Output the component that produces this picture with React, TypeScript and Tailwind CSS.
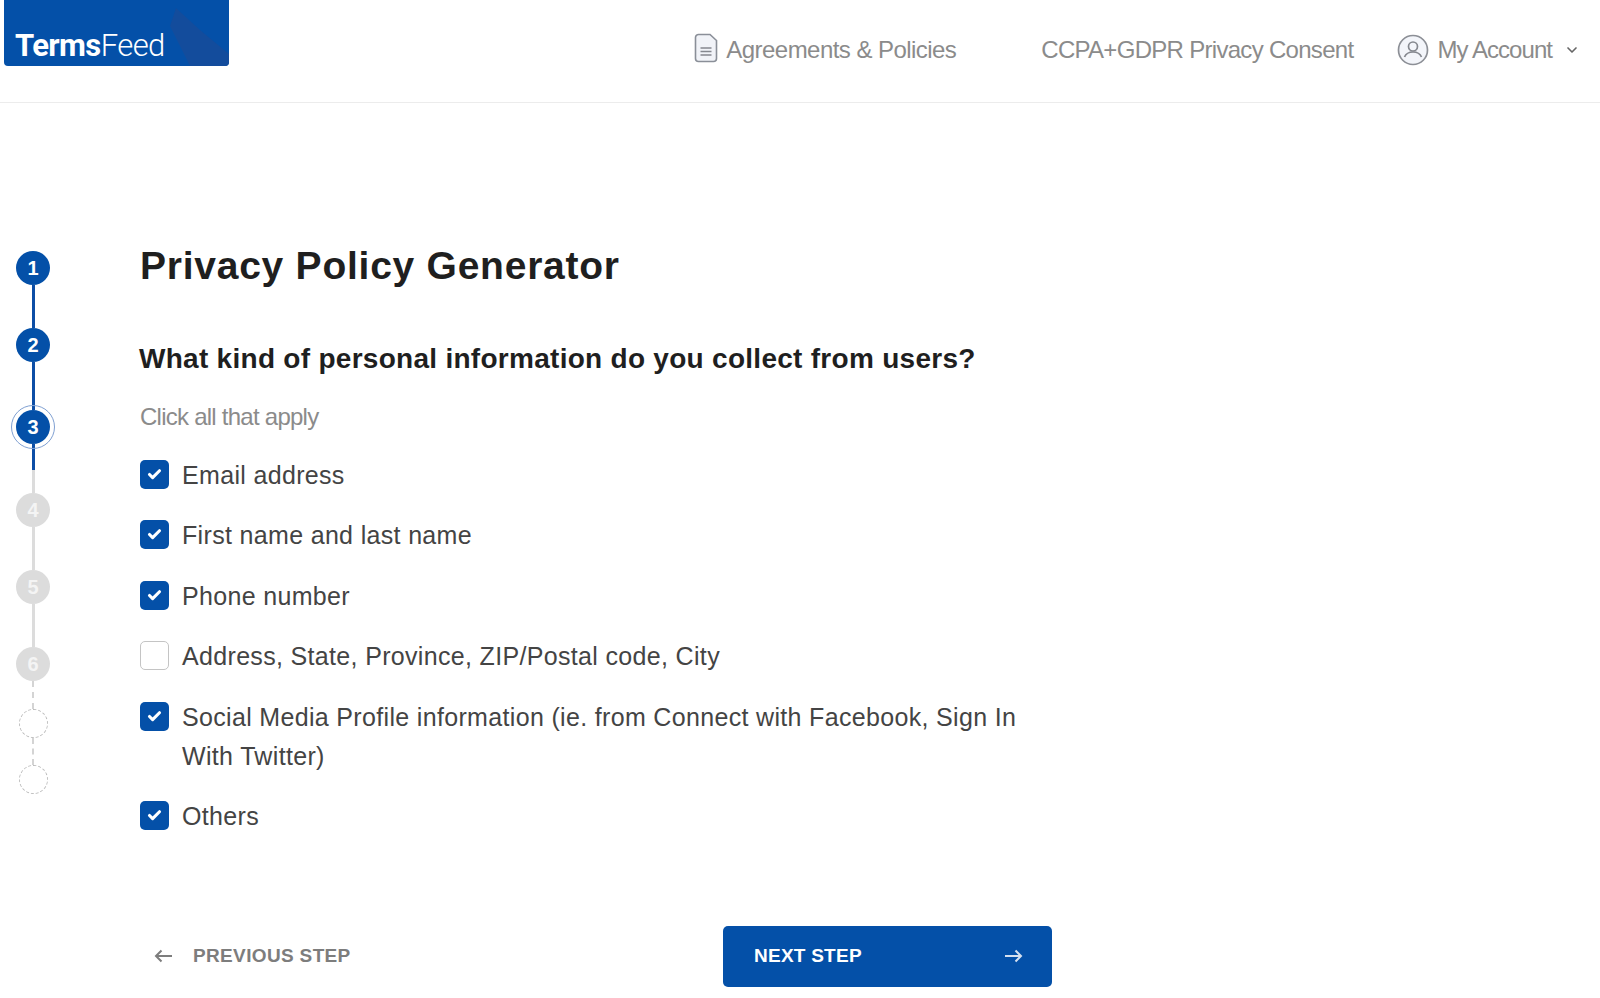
import React from "react";
import { Check, ChevronDown } from "lucide-react";

const items = [
  { label: "Email address", checked: true },
  { label: "First name and last name", checked: true },
  { label: "Phone number", checked: true },
  { label: "Address, State, Province, ZIP/Postal code, City", checked: false },
  { label: "Social Media Profile information (ie. from Connect with Facebook, Sign In With Twitter)", checked: true },
  { label: "Others", checked: true },
];

const Logo = () => (
  <div className="relative ml-1 flex h-[66px] w-[225px] items-end overflow-hidden rounded-b-[4px] bg-[#0450a8] pb-[2px] pl-[11px]">
    <svg className="absolute left-[160px] top-[4px]" width="65" height="62" viewBox="0 0 65 62">
      <path d="M12 4 L36 26 L65 50 L65 62 L26 62 L6 22 Z" fill="#134c9c" />
    </svg>
    <span className="relative font-['Roboto',sans-serif] text-[31px] leading-[36px] tracking-[-0.6px] text-white">
      <span className="font-bold">Terms</span>
      <span className="font-light">Feed</span>
    </span>
  </div>
);

const DocIcon = () => (
  <svg width="24" height="30" viewBox="0 0 24 30" fill="none" className="-mt-[4px]">
    <path d="M6 1.5h10l6.500 6v18a3 3 0 0 1-3 3H4.500a3 3 0 0 1-3-3v-21a3 3 0 0 1 3-3z" fill="#f1f3f8" stroke="#8a8f98" strokeWidth="1.600" />
    <path d="M6.500 15h11M6.500 18.500h11M6.500 22h11" stroke="#85888f" strokeWidth="1.500" />
  </svg>
);

const UserIcon = () => (
  <svg width="32" height="32" viewBox="0 0 32 32" fill="none">
    <circle cx="16" cy="16" r="14.500" fill="#f3f5fa" stroke="#8c8f96" strokeWidth="1.700" />
    <circle cx="16" cy="12.500" r="4.500" stroke="#85888f" strokeWidth="1.700" />
    <path d="M7.500 23c1.500-3.500 4.500-5 8.500-5s7 1.500 8.500 5" stroke="#85888f" strokeWidth="1.700" />
  </svg>
);

const Header = () => (
  <header className="flex h-[103px] border-b border-[#ececec] bg-white font-['Liberation_Sans',sans-serif] text-[24px] text-[#8b8b8b]">
    <Logo />
    <nav className="ml-auto flex h-[100px] items-center pr-[20px]">
      <span className="flex items-center gap-[8px] tracking-[-0.55px]">
        <DocIcon />
        Agreements &amp; Policies
      </span>
      <span className="ml-[85px] tracking-[-0.7px]">CCPA+GDPR Privacy Consent</span>
      <span className="ml-[44px] flex items-center gap-[8px] tracking-[-0.95px]">
        <UserIcon />
        My Account
        <ChevronDown size={16} strokeWidth={2.500} className="ml-[4px] text-[#666]" />
      </span>
    </nav>
  </header>
);

const Step = ({ n, done }: { n: number; done: boolean }) => (
  <div
    className={`flex h-[34px] w-[34px] shrink-0 items-center justify-center rounded-full text-[20px] font-bold ${
      done ? "bg-[#0450a8] text-white" : "bg-[#dcdcdc] text-[#f4f4f4]"
    }`}
  >
    {n}
  </div>
);

const Line = ({ h, done }: { h: string; done?: boolean }) => (
  <div className={`w-[3px] ${h} ${done ? "bg-[#0d4ea6]" : "bg-[#dcdcdc]"}`} />
);

const Stepper = () => (
  <aside className="flex w-[66px] shrink-0 flex-col items-center pt-[148px] font-['Liberation_Sans',sans-serif]">
    <Step n={1} done />
    <Line h="h-[43px]" done />
    <Step n={2} done />
    <Line h="h-[48px]" done />
    <div className="relative">
      <Step n={3} done />
      <div className="absolute -left-[5px] -top-[5px] h-[44px] w-[44px] rounded-full border border-[#7fa0d2]" />
    </div>
    <Line h="h-[26px]" done />
    <Line h="h-[23px]" />
    <Step n={4} done={false} />
    <Line h="h-[43px]" />
    <Step n={5} done={false} />
    <Line h="h-[43px]" />
    <Step n={6} done={false} />
    <div className="h-[28px] border-l-2 border-dashed border-[#d4d4d4]" />
    <div className="h-[29px] w-[29px] rounded-full border border-dashed border-[#bdbdbd]" />
    <div className="h-[27px] border-l-2 border-dashed border-[#d4d4d4]" />
    <div className="h-[29px] w-[29px] rounded-full border border-dashed border-[#bdbdbd]" />
  </aside>
);

const Option = ({ label, checked }: { label: string; checked: boolean }) => (
  <label className="flex items-start gap-[13px]">
    <span
      className={`mt-[4px] flex h-[29px] w-[29px] shrink-0 items-center justify-center rounded-[5px] ${
        checked ? "bg-[#0450a8]" : "border border-[#c4c4c4] bg-white"
      }`}
    >
      {checked && <Check size={15} strokeWidth={5} className="text-white" />}
    </span>
    <span className="text-[25px] leading-[39px] tracking-[0.33px] text-[#444444]">{label}</span>
  </label>
);

const App: React.FC = () => {
  return (
    <div className="h-[998px] overflow-hidden bg-white font-['Liberation_Sans',sans-serif]">
      <Header />
      <div className="flex">
        <Stepper />
        <main className="ml-[74px] w-[912px]">
          <h1 className="mt-[137px] text-[39px] font-bold leading-[52px] tracking-[0.75px] text-[#1f1f1f]">
            Privacy Policy Generator
          </h1>
          <h2 className="mt-[47px] -ml-px text-[28px] font-bold leading-[40px] tracking-[0.28px] text-[#1f1f1f]">
            What kind of personal information do you collect from users?
          </h2>
          <p className="mt-[18px] text-[24px] leading-[40px] tracking-[-0.75px] text-[#8b8b8b]">Click all that apply</p>
          <div className="mt-[19px] flex w-[885px] flex-col gap-[21.4px]">
            {items.map((item) => (
              <Option key={item.label} label={item.label} checked={item.checked} />
            ))}
          </div>
          <div className="mt-[90px] flex items-center">
            <button className="flex w-[583px] items-center gap-[20px] pl-[14px] text-[19px] font-bold tracking-[0.35px] text-[#7d7d7d]">
              <svg width="19" height="14" viewBox="0 0 19 14" fill="none" stroke="currentColor" strokeWidth="2">
                <path d="M18 7H2M7.500 1.500L2 7l5.500 5.500" />
              </svg>
              PREVIOUS STEP
            </button>
            <button className="flex h-[61px] w-[329px] items-center justify-between rounded-[5px] bg-[#0450a8] pl-[31px] pr-[29px] text-[19px] font-bold tracking-[0.25px] text-white">
              NEXT STEP
              <svg width="19" height="14" viewBox="0 0 19 14" fill="none" stroke="#d5e0f0" strokeWidth="2">
                <path d="M1 7h16M11.500 1.500L17 7l-5.500 5.500" />
              </svg>
            </button>
          </div>
        </main>
      </div>
    </div>
  );
};

export default App;
